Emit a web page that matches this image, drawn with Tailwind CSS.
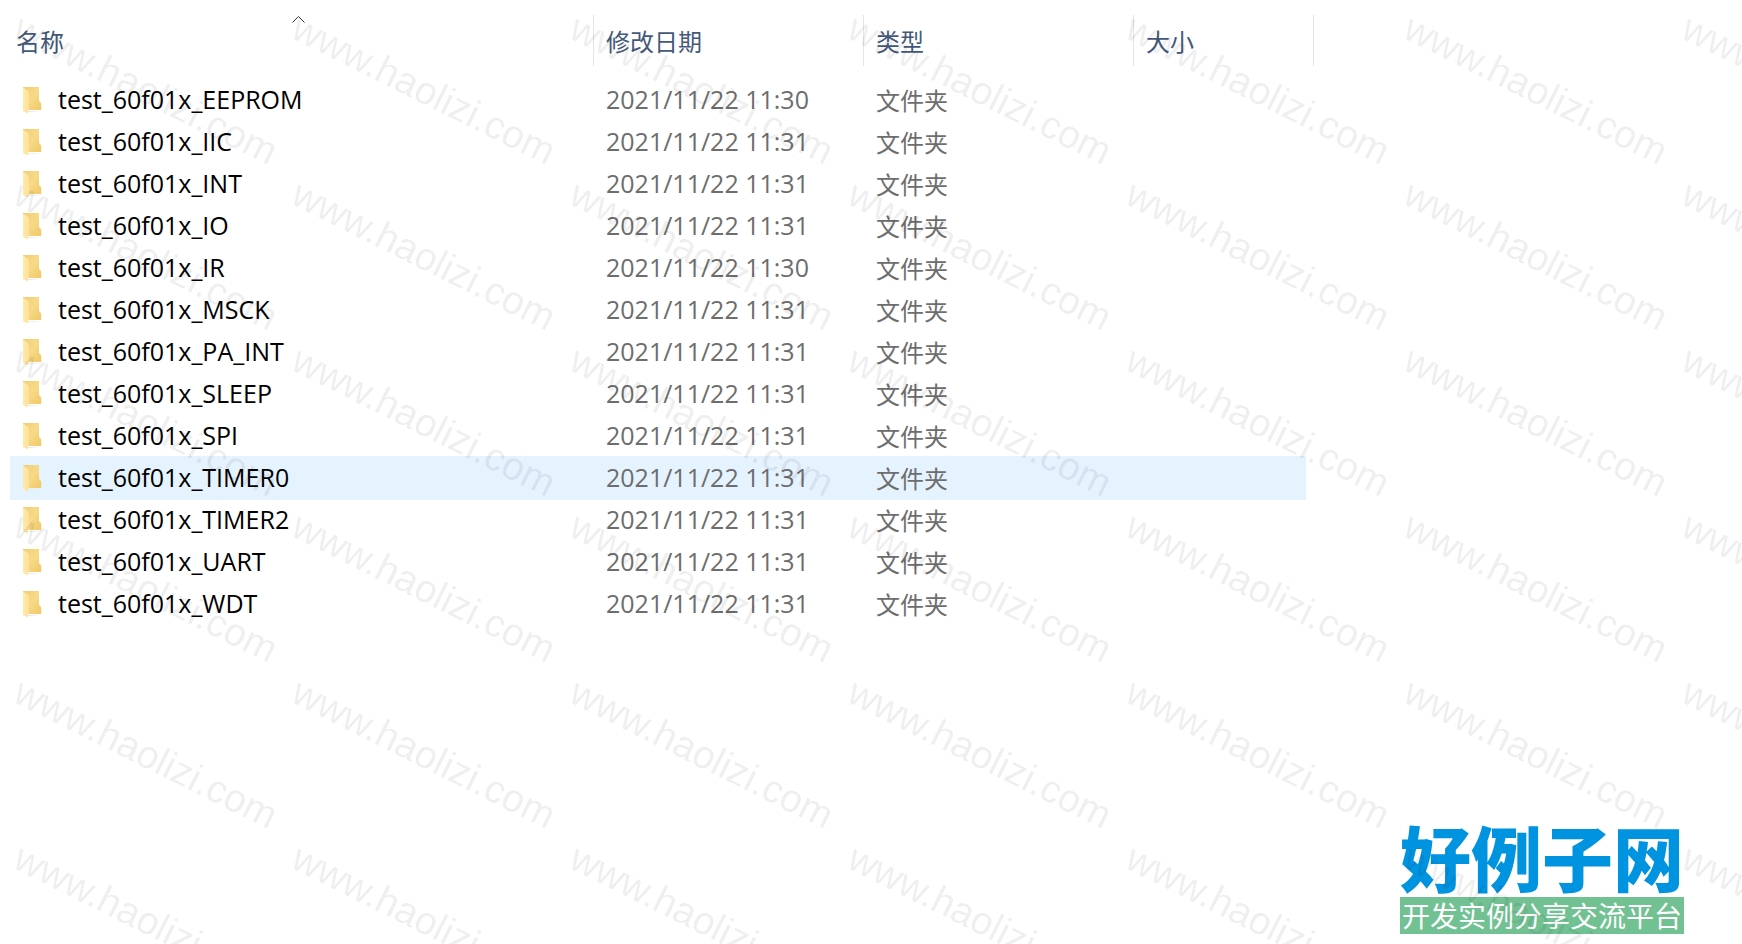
<!DOCTYPE html>
<html lang="zh-CN">
<head>
    <meta charset="UTF-8">
    <meta name="viewport" content="width=device-width, initial-scale=1.0">
    <title>test_60f01x</title>
    <script src="https://cdn.jsdelivr.net/npm/@tailwindcss/browser@4"></script>
</head>
<body class="relative flex min-h-screen flex-col overflow-x-hidden bg-white font-['Open_Sans','Noto_Sans_CJK_SC',sans-serif] text-2xl text-black">

    <!-- Shared shapes -->
    <svg class="absolute size-0" aria-hidden="true">
        <defs>
            <linearGradient id="folderBack" x1="0" y1="0" x2="1" y2="1">
                <stop offset="0" stop-color="#f0cf7a"/>
                <stop offset="0.5" stop-color="#f8d986"/>
                <stop offset="1" stop-color="#efc868"/>
            </linearGradient>
            <linearGradient id="folderFlap" x1="0" y1="0" x2="1" y2="0">
                <stop offset="0" stop-color="#ffe9a9"/>
                <stop offset="1" stop-color="#fde199"/>
            </linearGradient>
        </defs>
        <symbol id="folder" viewBox="0 0 19 28">
            <path d="M5 24h12l1-1v1l-12 1z" fill="#e9e9e9"/>
            <path d="M0 0h16v14l1.500 1.500 0.700 1V23H4L0 20z" fill="url(#folderBack)"/>
            <path d="M0 0.500l4.500 3q1.500 1 1.500 2.500v17H5v3.500L0 24z" fill="url(#folderFlap)"/>
        </symbol>
    </svg>

    <main class="pl-2.5">
        <table class="w-[1304px] table-fixed border-separate border-spacing-0 text-left">
            <colgroup>
                <col class="w-[584px]">
                <col class="w-[270px]">
                <col class="w-[270px]">
                <col class="w-[180px]">
            </colgroup>
            <thead class="text-[#44597a]">
                <tr class="h-[79px] align-top">
                    <th class="relative pt-[15px] font-normal" aria-sort="ascending">
                        <button type="button" class="block h-[51px] w-full border-r border-[#e5e5e5] pt-0.5 pl-1.5 text-left">名称</button>
                        <svg class="absolute top-[15px] left-[282px] h-2 w-[13px]" viewBox="0 0 13 8" fill="none" stroke="#333"><path d="M0.500 7.500l6-6 6 6"/></svg>
                    </th>
                    <th class="pt-[15px] font-normal">
                        <button type="button" class="block h-[51px] w-full border-r border-[#e5e5e5] pt-0.5 pl-3 text-left">修改日期</button>
                    </th>
                    <th class="pt-[15px] font-normal">
                        <button type="button" class="block h-[51px] w-full border-r border-[#e5e5e5] pt-0.5 pl-3 text-left">类型</button>
                    </th>
                    <th class="pt-[15px] font-normal">
                        <button type="button" class="block h-[51px] w-full border-r border-[#e5e5e5] pt-0.5 pl-3 text-left">大小</button>
                    </th>
                </tr>
            </thead>
            <tbody id="fileRows"></tbody>
        </table>
    </main>

    <!-- Site logo -->
    <footer class="mt-auto mr-[58px] mb-2.5 self-end text-center font-['Noto_Sans_CJK_SC',sans-serif]">
        <p class="pb-1 text-[71px] leading-[76px] font-black text-[#0093e0]">好例子网</p>
        <p class="bg-[#72c193] text-[28px] leading-[37px] text-white">开发实例分享交流平台</p>
    </footer>

    <!-- Watermark layer -->
    <div class="pointer-events-none absolute inset-0 overflow-hidden" aria-hidden="true">
        <div id="watermarks" class="grid grid-cols-[repeat(7,278px)] auto-rows-[166px] pt-2.5"></div>
    </div>

    <script>
        const files = [
            ['test_60f01x_EEPROM', '2021/11/22 11:30'],
            ['test_60f01x_IIC', '2021/11/22 11:31'],
            ['test_60f01x_INT', '2021/11/22 11:31'],
            ['test_60f01x_IO', '2021/11/22 11:31'],
            ['test_60f01x_IR', '2021/11/22 11:30'],
            ['test_60f01x_MSCK', '2021/11/22 11:31'],
            ['test_60f01x_PA_INT', '2021/11/22 11:31'],
            ['test_60f01x_SLEEP', '2021/11/22 11:31'],
            ['test_60f01x_SPI', '2021/11/22 11:31'],
            ['test_60f01x_TIMER0', '2021/11/22 11:31'],
            ['test_60f01x_TIMER2', '2021/11/22 11:31'],
            ['test_60f01x_UART', '2021/11/22 11:31'],
            ['test_60f01x_WDT', '2021/11/22 11:31'],
        ];
        const selected = 'test_60f01x_TIMER0';

        document.getElementById('fileRows').innerHTML = files.map(([name, date]) => {
            const bg = name === selected ? 'bg-[#e5f3ff] shadow-[0_1px_#e5f3ff,0_-1px_#e5f3ff]' : '';
            return `
                <tr class="h-[42px] text-[25px] leading-9">
                    <td class="p-0 ${bg}">
                        <div class="flex items-center">
                            <svg class="mt-0.5 mr-4 ml-[13px] h-7 w-[19px]"><use href="#folder"/></svg>
                            <span class="pb-0.5">${name}</span>
                        </div>
                    </td>
                    <td class="pt-0 pb-0.5 pl-3 text-[#6d6d6d] ${bg}">${date}</td>
                    <td class="pt-0.5 pb-0 pl-3 text-2xl leading-9 text-[#6d6d6d] ${bg}">文件夹</td>
                    <td class="relative p-0">${bg ? '<div class="absolute -inset-y-px right-2 left-0 bg-[#e5f3ff]"></div>' : ''}</td>
                </tr>`;
        }).join('');

        document.getElementById('watermarks').innerHTML = Array(42).fill(`
            <svg class="h-[166px] w-[278px] overflow-visible">
                <text transform="translate(11 27) rotate(26.500)" class="fill-black/8 font-['Liberation_Sans',sans-serif] text-[39px]">www.haolizi.com</text>
            </svg>`).join('');
    </script>
</body>
</html>
